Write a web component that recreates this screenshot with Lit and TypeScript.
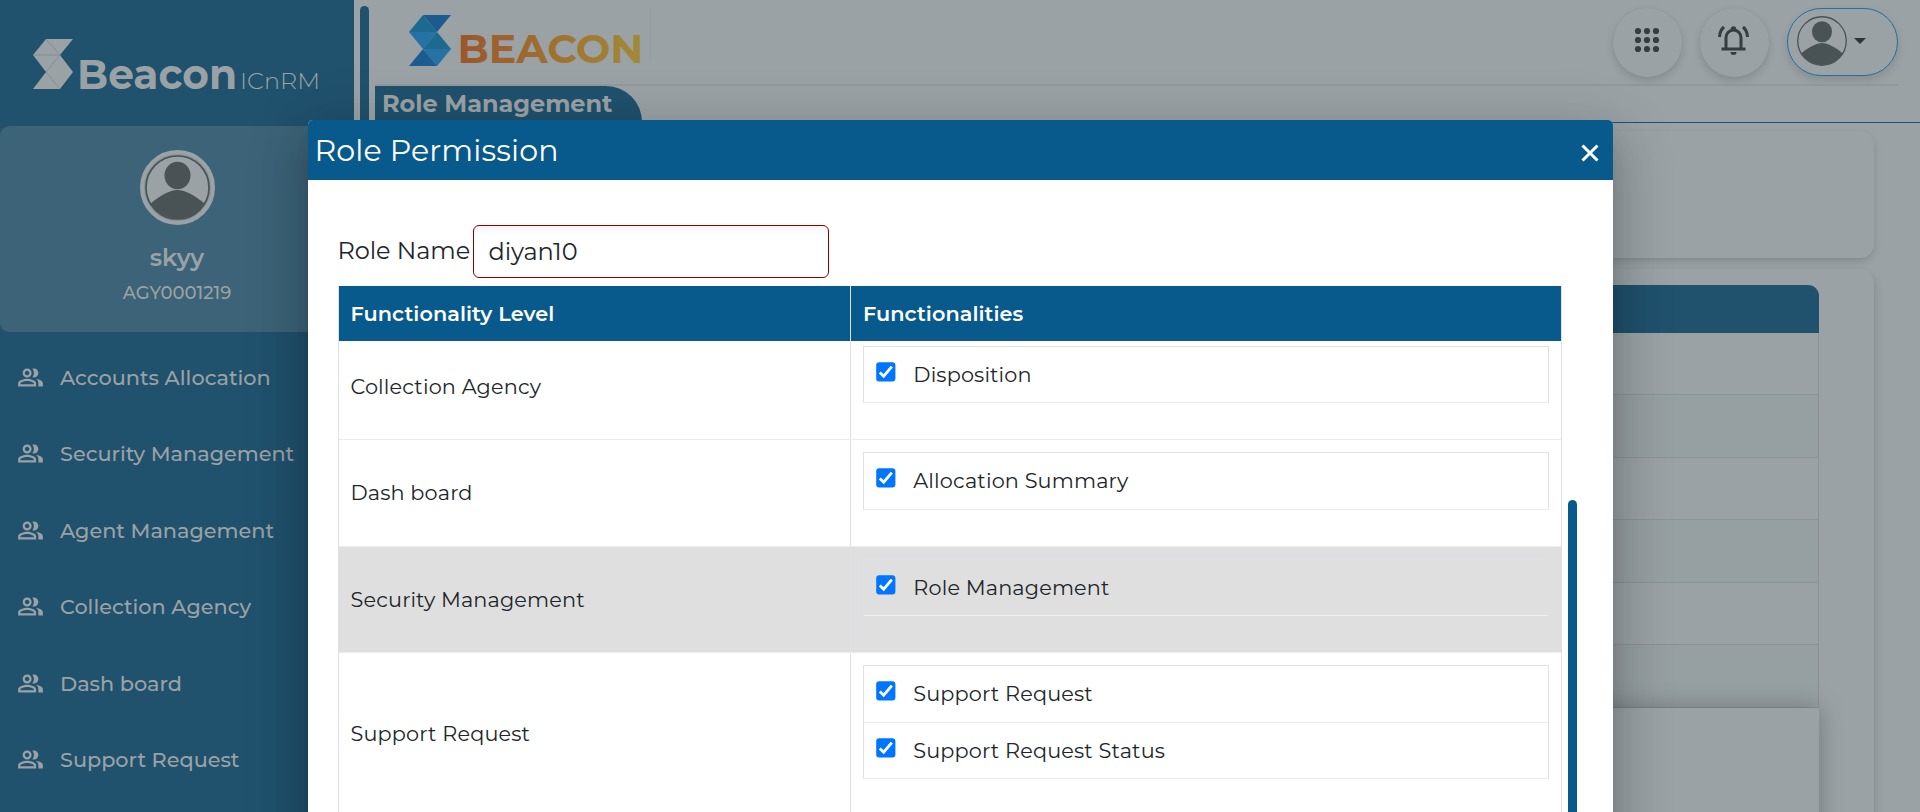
import { LitElement, html, css, svg } from "lit";
import { customElement } from "lit/decorators.js";

const menu = ["Accounts Allocation", "Security Management", "Agent Management", "Collection Agency", "Dash board", "Support Request"];

const rows = [
  { level: "Collection Agency", cut: true, items: ["Disposition"] },
  { level: "Dash board", items: ["Allocation Summary"] },
  { level: "Security Management", shaded: true, items: ["Role Management"] },
  { level: "Support Request", items: ["Support Request", "Support Request Status"] },
];

const people = svg`<path d="M16.67 13.13C18.04 14.06 19 15.32 19 17v3h4v-3c0-2.18-3.57-3.47-6.33-3.87zM15 12c2.21 0 4-1.79 4-4s-1.79-4-4-4c-.47 0-.91.1-1.33.24C14.5 5.27 15 6.58 15 8s-.5 2.73-1.33 3.76c.42.14.86.24 1.33.24zM9 12c2.21 0 4-1.79 4-4s-1.79-4-4-4-4 1.79-4 4 1.79 4 4 4zm0-6c1.1 0 2 .9 2 2s-.9 2-2 2-2-.9-2-2 .9-2 2-2zM9 13c-2.67 0-8 1.34-8 4v3h16v-3c0-2.66-5.33-4-8-4zm6 5H3v-.99C3.2 16.29 6.3 15 9 15s5.8 1.29 6 2v1z"/>`;

const avatar = (cls: string) => html`
  <svg class=${cls} viewBox="0 0 100 100">
    <defs><clipPath id="c"><circle cx="50" cy="50" r="48"/></clipPath></defs>
    <circle cx="50" cy="50" r="48.5" fill="#9aa2a5" stroke="#495255" stroke-width="2.6"/>
    <g clip-path="url(#c)" fill="#495255">
      <ellipse cx="50" cy="31.500" rx="20" ry="21"/>
      <path d="M7 76C24 62 38 54 50 54s26 8 43 22l-6 24H13z"/>
    </g>
  </svg>`;

@customElement("app-root")
export class AppRoot extends LitElement {
  static styles = css`
    :host { display: block; width: 1920px; height: 812px; overflow: hidden; position: relative; background: #9aa2a5; font-family: Montserrat, Inter, sans-serif; font-size: 20.800px; color: #212529; white-space: nowrap; }
    * { box-sizing: border-box; }
    svg { display: block; flex: none; overflow: visible; }
    .page { display: flex; height: 812px; }
    .side { width: 354px; background: #20516d; color: #9aa2a5; display: flex; flex-direction: column; flex: none; }
    .brand { height: 126px; padding: 38px 0 0 32px; flex: none; }
    .card { height: 206px; background: #3c6378; border-radius: 9px; display: flex; flex-direction: column; align-items: center; padding-top: 24px; flex: none; }
    .ring { width: 75px; height: 75px; border-radius: 50%; border: 4px solid #9aa2a5; background: #87949a; display: grid; place-items: center; }
    .face { width: 65px; height: 65px; }
    .nick { margin-top: 18px; font: 600 24px/30px Montserrat, Inter, sans-serif; }
    .code { margin-top: 8px; font: 500 18px/24px Montserrat, Inter, sans-serif; }
    .menu { padding-top: 7px; flex: none; }
    .item { height: 76.500px; display: flex; align-items: center; padding-left: 16.500px; gap: 16.500px; font-weight: 500; }
    .item .ico { width: 27px; height: 27px; fill: #9aa2a5; }
    .gutter { width: 21px; flex: none; padding: 6px 6px 0; overflow: hidden; }
    .thumb { height: 820px; border-radius: 5px 5px 0 0; background: #20516d; }
    .main { flex: 1; display: flex; flex-direction: column; min-width: 0; }
    .head { height: 86px; width: 1523px; display: flex; border-bottom: 2px solid #92999c; flex: none; }
    .logo { width: 276px; height: 50px; border-right: 1px solid #939b9e; margin-top: 8px; }
    .logo svg { margin-top: -4px; }
    .tools { margin-left: auto; display: flex; gap: 18px; padding-top: 8px; }
    .round { width: 69px; height: 69px; border-radius: 50%; background: #9aa2a5; box-shadow: 0 4px 9px rgba(0,0,0,.13), 0 0 3px rgba(0,0,0,.04); }
    .profile { width: 111px; height: 68px; border-radius: 34px; border: 1px solid #246fa3; background: #9aa2a5; display: flex; padding: 7px 0 0 9px; gap: 7px; box-shadow: 0 4px 9px rgba(0,0,0,.13); }
    .me { width: 50px; height: 50px; }
    .tabs { height: 37px; border-bottom: 1px solid #20516d; flex: none; }
    .tab { width: 267px; height: 36px; background: #20516d; color: #9aa2a5; border-radius: 0 36px 0 0; padding-left: 7px; font: 700 24px/35px Montserrat, Inter, sans-serif; letter-spacing: -.05px; }
    .panel { width: 1489px; height: 127px; margin: 8px 0 0 10px; border-radius: 14px; box-shadow: 0 4px 8px -1px rgba(0,0,0,.15), 0 0 2px rgba(0,0,0,.03); flex: none; }
    .listing { width: 1489px; height: 600px; margin: 11px 0 0 10px; border-radius: 14px; box-shadow: 2px 4px 8px -1px rgba(0,0,0,.14), 0 0 2px rgba(0,0,0,.03); flex: none; padding: 16px 55px 0 30px; }
    .bar { height: 48px; border-radius: 11px 11px 0 0; background: #20516d; }
    .line { height: 62.450px; border: solid #899396; border-width: 0 1px 1px 0; }
    .line.odd { background: #969fa2; }
    .foot { height: 200px; background: #9aa2a5; box-shadow: 0 0 24px rgba(0,0,0,.26); position: relative; }
    .dialog { position: absolute; left: 308px; top: 120px; width: 1305px; height: 760px; background: #fff; border-radius: 5px; overflow: hidden; box-shadow: 0 14px 19px -9px rgba(0,0,0,.2), 0 30px 48px 4px rgba(0,0,0,.14), 0 11px 58px 10px rgba(0,0,0,.12); }
    .title { height: 60px; background: #075a8b; color: #fff; display: flex; justify-content: space-between; padding: 0 12px 0 6.500px; font-size: 30px; line-height: 61px; letter-spacing: .14px; }
    .close { margin-top: 22px; }
    .field { display: flex; height: 106px; padding: 45px 0 0 29.500px; font-size: 24px; line-height: 51px; letter-spacing: -.08px; }
    .name { width: 135.500px; }
    .input { width: 356px; height: 53px; border: 1px solid #8b0000; border-radius: 6px; padding-left: 14.500px; box-shadow: inset 0 9px 8px -6px rgba(0,0,0,.06); }
    .content { display: flex; }
    .grid { width: 1224px; margin-left: 30px; border: solid #dee2e6; border-width: 0 1px; letter-spacing: .15px; }
    .row { display: grid; grid-template-columns: 512px 1fr; border-bottom: 1px solid #eaecee; }
    .row.shaded { background: #dfdfdf; }
    .row.top { background: #075a8b; color: #fff; height: 55px; border: 0; font-weight: 600; letter-spacing: .08px; }
    .cell { display: flex; align-items: center; padding: 0 12px; }
    .cell.left { border-right: 1px solid #dee2e6; padding: 0 12px 1px 11.500px; }
    .row.top .left { padding-bottom: 0; }
    .cell.right { padding: 12px 12px 36.300px; align-items: stretch; }
    .row.top .cell:last-child { padding: 0 12px; }
    .row.cut .left { padding-bottom: 7px; }
    .row.cut .right { padding-top: 5.200px; padding-bottom: 35.800px; }
    .box { flex: 1; border: solid #dee2e6; border-width: 1px 1px 0; }
    .opt { height: 56.300px; border-bottom: 1px solid #e9ebed; display: flex; gap: 17.300px; padding-left: 12px; line-height: 56px; }
    .shaded .opt { border-bottom-color: #f0f0f0; }
    .tick { margin-top: 15px; }
    .track { width: 9px; height: 400px; margin: 214px 0 0 6px; border-radius: 5px; background: #075a8b; }
  `;

  render() {
    return html`
      <div class="page">
        <aside class="side">
          <div class="brand">
            <svg width="300" height="60">
              <path d="M14 1H41L28 17 41 34 28 51H1L14 34 1 17z" fill="#9aa2a5"/>
              <path d="M14 1 28 17M1 17H28L14 34 28 51" fill="none" stroke="#7c8c94" stroke-width=".8"/>
              <g fill="#9aa2a5">
                <text x="45" y="50.500" font-size="42" font-weight="700" textLength="160" lengthAdjust="spacingAndGlyphs">Beacon</text>
                <text x="208" y="50.500" font-size="23.500" font-weight="300" textLength="80" lengthAdjust="spacingAndGlyphs">ICnRM</text>
              </g>
            </svg>
          </div>
          <div class="card">
            <div class="ring">${avatar("face")}</div>
            <div class="nick">skyy</div>
            <div class="code">AGY0001219</div>
          </div>
          <nav class="menu">
            ${menu.map(m => html`<div class="item"><svg class="ico" viewBox="0 0 24 24">${people}</svg><span>${m}</span></div>`)}
          </nav>
        </aside>
        <div class="gutter"><div class="thumb"></div></div>
        <main class="main">
          <header class="head">
            <div class="logo">
              <svg width="275" height="70">
                <defs><linearGradient id="warm"><stop offset="0" stop-color="#9b562b"/><stop offset="1" stop-color="#a28a37"/></linearGradient></defs>
                <path d="M48 11H76L62 28z" fill="#1b5b90"/><path d="M48 11 62 28H34z" fill="#1c6a8f"/>
                <path d="M34 28H62L48 45z" fill="#2672a5"/><path d="M62 28 76 45H48z" fill="#1c6a8f"/>
                <path d="M76 45H48L62 62z" fill="#2672a5"/><path d="M48 45 62 62H34z" fill="#1b5b90"/>
                <text x="82.500" y="58.500" font-size="40.500" font-weight="700" fill="url(#warm)" textLength="186" lengthAdjust="spacingAndGlyphs">BEACON</text>
              </svg>
            </div>
            <div class="tools">
              <div class="round"><svg width="69" height="69" fill="#343d40">${[23, 32, 41].map(y => [25, 34, 43].map(x => svg`<circle cx=${x} cy=${y} r="3.1"/>`))}</svg></div>
              <div class="round"><svg width="69" height="69" viewBox="1 0 69 69" fill="none" stroke="#343d40" stroke-width="3">
                <path d="M22.500 41H46.500M27 41V29.500a7.500 7.500 0 0 1 15 0V41M20.500 29Q20.700 22.500 25 19M48.500 29Q48.300 22.500 44 19"/>
                <path d="M31.800 21a2.700 2.700 0 1 1 5.400 0v2h-5.400zM31.500 44h6a3 3 0 0 1-6 0z" fill="#343d40" stroke="none"/></svg></div>
              <div class="profile">${avatar("me")}<svg width="12" height="50"><path d="M0 22H12L6 28z" fill="#2b3437"/></svg></div>
            </div>
          </header>
          <div class="tabs"><div class="tab">Role Management</div></div>
          <div class="panel"></div>
          <div class="listing">
            <div class="bar"></div>
            ${[0, 1, 2, 3, 4, 5].map(i => html`<div class="line ${i % 2 ? "odd" : ""}"></div>`)}
            <div class="foot"></div>
          </div>
        </main>
      </div>
      <section class="dialog">
        <div class="title"><span>Role Permission</span>
          <svg class="close" width="22" height="22"><path d="M3.500 3.500 18.500 18.500M18.500 3.500 3.500 18.500" stroke="#fff" stroke-width="3"/></svg>
        </div>
        <div class="field"><div class="name">Role Name</div><div class="input">diyan10</div></div>
        <div class="content">
          <div class="grid">
            <div class="row top">
              <div class="cell left">Functionality Level</div>
              <div class="cell">Functionalities</div>
            </div>
            ${rows.map(r => html`<div class="row ${r.shaded ? "shaded" : ""} ${r.cut ? "cut" : ""}">
              <div class="cell left">${r.level}</div>
              <div class="cell right"><div class="box">
                ${r.items.map(o => html`<div class="opt">
                  <svg class="tick" width="20" height="20"><rect x=".2" y=".2" width="19.200" height="19.200" rx="3" fill="#0075ff"/><path d="M3.800 10.500 7.700 14.200 15.800 4.600" fill="none" stroke="#fff" stroke-width="2.800"/></svg>
                  <span>${o}</span></div>`)}
              </div></div>
            </div>`)}
          </div>
          <div class="track"></div>
        </div>
      </section>`;
  }
}
